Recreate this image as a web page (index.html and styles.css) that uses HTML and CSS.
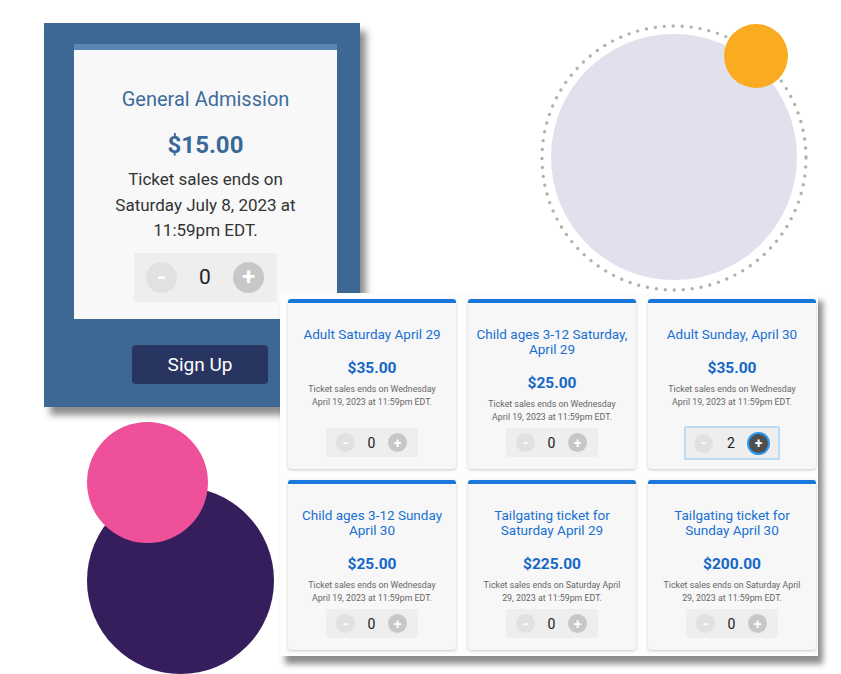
FILE: index.html
```html
<!DOCTYPE html>
<html lang="en">
<head>
    <meta charset="UTF-8">
    <meta name="viewport" content="width=device-width, initial-scale=1.0">
    <title>Ticket Sign Up</title>
    <link rel="stylesheet" href="styles.css">
</head>
<body>
    <div class="stage">
        <!-- Decorative circles -->
        <svg class="ring" width="268" height="268" viewBox="0 0 268 268">
            <circle cx="134" cy="134" r="132" fill="none" stroke="#b0b0b0" stroke-width="3.4" stroke-linecap="round" stroke-dasharray="0 9"></circle>
        </svg>
        <div class="dot dot-lavender"></div>
        <div class="dot dot-orange"></div>
        <div class="dot dot-purple"></div>
        <div class="dot dot-pink"></div>

        <!-- General admission panel -->
        <div class="admission-panel">
            <div class="admission-card">
                <h2 class="big-title">General Admission</h2>
                <div class="big-price">$15.00</div>
                <p class="big-note">Ticket sales ends on Saturday July 8, 2023 at 11:59pm EDT.</p>
                <div class="counter counter-big">
                    <span class="btn btn-minus">-</span>
                    <span class="qty">0</span>
                    <span class="btn btn-plus">+</span>
                </div>
            </div>
            <button class="signup">Sign Up</button>
        </div>

        <!-- Ticket grid -->
        <div class="ticket-panel">
            <div class="ticket">
                <h3>Adult Saturday April 29</h3>
                <div class="price">$35.00</div>
                <p class="note">Ticket sales ends on Wednesday April 19, 2023 at 11:59pm EDT.</p>
                <div class="counter"><span class="btn btn-minus">-</span><span class="qty">0</span><span class="btn btn-plus">+</span></div>
            </div>
            <div class="ticket">
                <h3>Child ages 3-12 Saturday, April 29</h3>
                <div class="price">$25.00</div>
                <p class="note">Ticket sales ends on Wednesday April 19, 2023 at 11:59pm EDT.</p>
                <div class="counter"><span class="btn btn-minus">-</span><span class="qty">0</span><span class="btn btn-plus">+</span></div>
            </div>
            <div class="ticket">
                <h3>Adult Sunday, April 30</h3>
                <div class="price">$35.00</div>
                <p class="note">Ticket sales ends on Wednesday April 19, 2023 at 11:59pm EDT.</p>
                <div class="counter active"><span class="btn btn-minus">-</span><span class="qty">2</span><span class="btn btn-plus">+</span></div>
            </div>
            <div class="ticket">
                <h3>Child ages 3-12 Sunday April 30</h3>
                <div class="price">$25.00</div>
                <p class="note">Ticket sales ends on Wednesday April 19, 2023 at 11:59pm EDT.</p>
                <div class="counter"><span class="btn btn-minus">-</span><span class="qty">0</span><span class="btn btn-plus">+</span></div>
            </div>
            <div class="ticket">
                <h3>Tailgating ticket for Saturday April 29</h3>
                <div class="price">$225.00</div>
                <p class="note">Ticket sales ends on Saturday April 29, 2023 at 11:59pm EDT.</p>
                <div class="counter"><span class="btn btn-minus">-</span><span class="qty">0</span><span class="btn btn-plus">+</span></div>
            </div>
            <div class="ticket">
                <h3>Tailgating ticket for Sunday April 30</h3>
                <div class="price">$200.00</div>
                <p class="note">Ticket sales ends on Saturday April 29, 2023 at 11:59pm EDT.</p>
                <div class="counter"><span class="btn btn-minus">-</span><span class="qty">0</span><span class="btn btn-plus">+</span></div>
            </div>
        </div>
    </div>
</body>
</html>
```

FILE: styles.css
```css
/* Page */
body {
    margin: 0;
    background: #fff;
    font-family: Roboto, "Liberation Sans", sans-serif;
    overflow: hidden;
}

/* Collage canvas */
.stage {
    position: relative;
    width: 841px;
    height: 674px;
}

/* Decorative circles */
.ring {
    position: absolute;
    left: 540px;
    top: 24px;
}

.dot {
    position: absolute;
    border-radius: 50%;
}

.dot-lavender {
    left: 551px;
    top: 34px;
    width: 246px;
    height: 246px;
    background: #e3e0ee;
}

.dot-orange {
    left: 724px;
    top: 24px;
    width: 64px;
    height: 64px;
    background: #f9ac1f;
}

.dot-purple {
    left: 87px;
    top: 487px;
    width: 187px;
    height: 187px;
    background: #351e5b;
}

.dot-pink {
    left: 87px;
    top: 422px;
    width: 121px;
    height: 121px;
    background: #ee5199;
}

/* General admission panel */
.admission-panel {
    position: absolute;
    left: 44px;
    top: 23px;
    width: 316px;
    height: 384px;
    box-sizing: border-box;
    padding: 21px 23px 0 30px;
    background: #3c6893;
    box-shadow: 6px 8px 7px rgba(0, 0, 0, 0.45);
    display: flex;
    flex-direction: column;
    align-items: center;
}

.admission-card {
    width: 263px;
    height: 275px;
    box-sizing: border-box;
    background: #f8f8f8;
    border-top: 6px solid #5a86b3;
    padding: 37px 30px 0;
    text-align: center;
    display: flex;
    flex-direction: column;
    align-items: center;
}

.big-title {
    margin: 0;
    font-size: 20px;
    line-height: 24px;
    font-weight: 400;
    color: #3d6c9c;
}

.big-price {
    margin-top: 20px;
    font-size: 24px;
    line-height: 28px;
    font-weight: 700;
    color: #3a6897;
}

.big-note {
    margin: 8px 0 0;
    font-size: 17px;
    line-height: 25.5px;
    color: #333;
}

/* Sign up button */
.signup {
    margin: 26px 0 0 -11px;
    width: 136px;
    height: 39px;
    border: none;
    border-radius: 4px;
    background: #283561;
    color: #fff;
    font-family: Roboto, "Liberation Sans", sans-serif;
    font-size: 19px;
}

/* Counters */
.counter {
    display: flex;
    align-items: center;
    justify-content: space-between;
    box-sizing: border-box;
    width: 92px;
    height: 29px;
    padding: 0 9px 0 8px;
    margin-top: auto;
    background: #eeeeee;
    border: 2px solid transparent;
    border-radius: 2px;
}

.counter-big {
    width: 143px;
    height: 49px;
    margin-top: 9px;
    padding: 0 13px 0 12px;
    border: none;
}

.btn {
    display: flex;
    align-items: center;
    justify-content: center;
    width: 19px;
    height: 19px;
    border-radius: 50%;
    color: #fff;
    font-size: 14px;
    font-weight: 700;
}

.btn-minus {
    background: #e1e1e1;
}

.btn-plus {
    background: #c7c7c7;
}

.counter-big .btn {
    width: 31px;
    height: 31px;
    font-size: 24px;
}

.qty {
    font-size: 14px;
    color: #222;
}

.counter-big .qty {
    font-size: 21px;
}

.counter.active {
    width: 96px;
    height: 34px;
    padding: 0 10px 0 8px;
    border-color: #b9dbf4;
    margin-bottom: -3px;
}

.counter.active .btn-plus {
    background: #4f4f4f;
    box-shadow: 0 0 0 2px #2b97ee;
}

/* Ticket grid */
.ticket-panel {
    position: absolute;
    left: 280px;
    top: 293px;
    width: 538px;
    height: 363px;
    box-sizing: border-box;
    padding: 6px 2px 5px 8px;
    background: #fdfdfd;
    box-shadow: 5px 8px 6px rgba(0, 0, 0, 0.45);
    display: grid;
    grid-template-columns: repeat(3, 168px);
    grid-auto-rows: 170px;
    column-gap: 12px;
    row-gap: 11px;
}

.ticket {
    background: #f7f7f7;
    border-top: 4px solid #1a78dc;
    border-radius: 3px;
    box-shadow: 0 1px 3px rgba(0, 0, 0, 0.2);
    padding: 24px 14px 12px;
    text-align: center;
    display: flex;
    flex-direction: column;
    align-items: center;
}

.ticket h3 {
    margin: 0 -10px;
    font-size: 13.5px;
    line-height: 15px;
    font-weight: 400;
    color: #1a70d2;
}

.price {
    margin-top: 16px;
    font-size: 15.5px;
    line-height: 20px;
    font-weight: 700;
    color: #1567c7;
}

.note {
    margin: 5px 0 0;
    font-size: 8.8px;
    line-height: 13px;
    color: #666;
}
```
